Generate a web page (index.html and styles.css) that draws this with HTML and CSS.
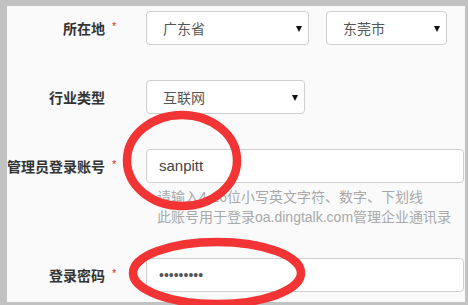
FILE: index.html
```html
<!DOCTYPE html>
<html lang="zh-CN">
<head>
<meta charset="utf-8">
<link rel="stylesheet" href="styles.css">
</head>
<body>
<div class="panel">
  <div class="group">
    <div class="label">所在地</div>
    <div class="star">*</div>
    <div class="controls">
      <div class="select w-prov">广东省<span class="caret"></span></div>
      <div class="select w-city">东莞市<span class="caret"></span></div>
    </div>
  </div>
  <div class="group">
    <div class="label">行业类型</div>
    <div class="star"></div>
    <div class="controls">
      <div class="select w-ind">互联网<span class="caret"></span></div>
    </div>
  </div>
  <div class="group group-help">
    <div class="label">管理员登录账号</div>
    <div class="star">*</div>
    <div class="controls col">
      <div class="input">sanpitt</div>
      <div class="help">请输入4-16位小写英文字符、数字、下划线<br>此账号用于登录oa.dingtalk.com管理企业通讯录</div>
    </div>
  </div>
  <div class="group">
    <div class="label">登录密码</div>
    <div class="star">*</div>
    <div class="controls col">
      <div class="input pwd">•••••••••</div>
    </div>
  </div>
</div>
<svg class="marks" width="468" height="305" viewBox="0 0 468 305">
  <ellipse cx="182" cy="160.5" rx="55" ry="45.5" fill="none" stroke="#f23434" stroke-width="8.5"/>
  <ellipse cx="217" cy="273" rx="84" ry="31" fill="none" stroke="#f23434" stroke-width="8.5"/>
</svg>
</body>
</html>
```
FILE: styles.css
```css
html, body {
  margin: 0;
  padding: 0;
}
body {
  width: 468px;
  height: 305px;
  overflow: hidden;
  background: #c2c2c2;
  position: relative;
  font-family: "Liberation Sans", "Noto Sans CJK SC", sans-serif;
}
.panel {
  margin: 6px 3px 0 7px;
  height: 296px;
  overflow: hidden;
  background: #fafafa;
  padding-top: 5px;
  box-sizing: border-box;
}
.group {
  display: flex;
  align-items: flex-start;
  margin-bottom: 35px;
}
.group-help {
  margin-bottom: 31px;
}
.label {
  width: 98px;
  flex: none;
  text-align: right;
  font-family: "Noto Sans CJK SC", sans-serif;
  font-weight: bold;
  font-size: 14px;
  color: #333;
  line-height: 34px;
  white-space: nowrap;
}
.star {
  width: 41px;
  flex: none;
  box-sizing: border-box;
  padding-left: 7px;
  color: #d0312d;
  font-size: 11px;
  line-height: 30px;
}
.controls {
  display: flex;
  gap: 17px;
}
.controls.col {
  flex-direction: column;
  gap: 0;
}
.select, .input {
  box-sizing: border-box;
  height: 34px;
  background: #fff;
  border: 1px solid #cfcfcf;
  border-radius: 4px;
  font-family: "Noto Sans CJK SC", sans-serif;
  font-size: 14px;
  color: #555;
  line-height: 32px;
  position: relative;
}
.select {
  padding-left: 16px;
}
.w-prov { width: 163px; }
.w-city { width: 121px; }
.w-ind { width: 159px; }
.caret {
  position: absolute;
  right: 6px;
  top: 14px;
  width: 0;
  height: 0;
  border-left: 3.5px solid transparent;
  border-right: 3.5px solid transparent;
  border-top: 6px solid #111;
}
.input {
  width: 318px;
  padding-left: 12px;
  font-family: "Liberation Sans", sans-serif;
  font-size: 15px;
  color: #444;
}
.pwd {
  font-size: 14px;
  color: #555;
}
.help {
  margin-top: 4px;
  padding-left: 11px;
  font-family: "Liberation Sans", "Noto Sans CJK SC", sans-serif;
  font-size: 14px;
  line-height: 20px;
  color: #a9a9a9;
  white-space: nowrap;
}
.marks {
  position: absolute;
  left: 0;
  top: 0;
  pointer-events: none;
}
```
